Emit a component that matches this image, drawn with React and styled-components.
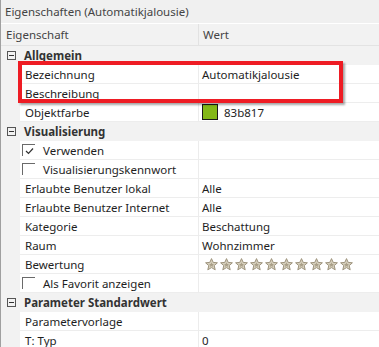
import React from 'react'
import styled, { createGlobalStyle } from 'styled-components'

const GlobalStyle = createGlobalStyle`
  html, body {
    margin: 0;
    padding: 0;
    background: #ffffff;
  }
  body {
    font-family: "Noto Sans", "Open Sans", sans-serif;
    font-size: 11.5px;
  }
`

const Panel = styled.div`
  position: relative;
  width: 379px;
  height: 347px;
  overflow: hidden;
  box-sizing: border-box;
  border-left: 1px solid #a0a0a0;
  background: #ffffff;
  color: #1e1e1e;
`

const TitleBar = styled.div`
  height: 24px;
  box-sizing: border-box;
  padding-left: 4px;
  display: flex;
  align-items: center;
  background: #f0f0f0;
  border-bottom: 1px solid #ffffff;
  color: #444;
`

const HeaderRow = styled.div`
  height: 22px;
  box-sizing: border-box;
  display: grid;
  grid-template-columns: 198px 1fr;
  background: #f2f2f2;
  border-bottom: 1px solid #e3e3e3;
  color: #444;
`

const HeaderCell = styled.div`
  display: flex;
  align-items: center;
  padding-left: ${(p) => (p.$first ? '5px' : '4px')};
  border-right: ${(p) => (p.$first ? '1px solid #e2e2e2' : 'none')};
`

const GroupRow = styled.div`
  height: 19px;
  box-sizing: border-box;
  display: flex;
  align-items: center;
  background: #f2f2f2;
  font-weight: 700;
  color: #333;
`

const ExpandBox = styled.span`
  width: 9px;
  height: 9px;
  box-sizing: border-box;
  margin: 0 8px 0 6px;
  border: 1px solid #555;
  position: relative;

  &::after {
    content: '';
    position: absolute;
    left: 1px;
    right: 1px;
    top: 3px;
    height: 1px;
    background: #333;
  }
`

const PropRow = styled.div`
  height: 19px;
  display: grid;
  grid-template-columns: 19px 179px 1fr;
`

const Gutter = styled.div`
  background: #f2f2f2;
`

const NameCell = styled.div`
  display: flex;
  align-items: center;
  box-sizing: border-box;
  padding-left: ${(p) => (p.$check ? '2px' : '5px')};
  border-right: 1px solid #ececec;
  border-bottom: 1px solid #ededed;
  white-space: nowrap;
`

const ValueCell = styled.div`
  display: flex;
  align-items: center;
  box-sizing: border-box;
  padding-left: 3px;
  border-bottom: 1px solid #ededed;
  white-space: nowrap;
`

const CheckBox = styled.span`
  width: 13px;
  height: 12px;
  box-sizing: border-box;
  margin-right: 8px;
  border-top: 1px solid #6a6a6a;
  border-left: 1px solid #6a6a6a;
  display: flex;
  align-items: center;
  justify-content: center;
`

const Swatch = styled.span`
  width: 16px;
  height: 16px;
  box-sizing: border-box;
  margin-right: 6px;
  border: 1px solid #1a1a1a;
  background: ${(p) => p.$color};
`

const Stars = styled.div`
  display: flex;
  gap: 2px;
  padding-left: 3px;
`

const Highlight = styled.div`
  position: absolute;
  left: 17px;
  top: 61px;
  width: 325px;
  height: 42px;
  box-sizing: border-box;
  border: 4px solid #ee1c24;
  box-shadow: 2px 2px 2px rgba(0, 0, 0, 0.35);
  pointer-events: none;
`

function Star() {
  return (
    <svg width="13" height="13" viewBox="0 0 13 13">
      <path
        d="M6.5 0.6 L8.2 4.4 L12.4 4.8 L9.2 7.6 L10.2 11.8 L6.5 9.6 L2.8 11.8 L3.8 7.6 L0.6 4.8 L4.8 4.4 Z"
        fill="#d6cfbc"
        stroke="#9d937c"
        strokeWidth="1"
        strokeLinejoin="round"
      />
      <path
        d="M6.5 4.2 L7.2 5.9 L9 6.1 L7.7 7.3 L8.1 9 L6.5 8.1 L4.9 9 L5.3 7.3 L4 6.1 L5.8 5.9 Z"
        fill="#a99f88"
      />
    </svg>
  )
}

function Check() {
  return (
    <svg width="9" height="8" viewBox="0 0 9 8">
      <path d="M1 4 L3.5 6.5 L8 1.5" fill="none" stroke="#333" strokeWidth="1.2" />
    </svg>
  )
}

const rows = [
  { group: 'Allgemein' },
  { name: 'Bezeichnung', value: 'Automatikjalousie' },
  { name: 'Beschreibung', value: '' },
  { name: 'Objektfarbe', value: '83b817', color: '#83b817' },
  { group: 'Visualisierung' },
  { name: 'Verwenden', check: true, checked: true },
  { name: 'Visualisierungskennwort', check: true },
  { name: 'Erlaubte Benutzer lokal', value: 'Alle' },
  { name: 'Erlaubte Benutzer Internet', value: 'Alle' },
  { name: 'Kategorie', value: 'Beschattung' },
  { name: 'Raum', value: 'Wohnzimmer' },
  { name: 'Bewertung', stars: 10 },
  { name: 'Als Favorit anzeigen', check: true },
  { group: 'Parameter Standardwert' },
  { name: 'Parametervorlage', value: '' },
  { name: 'T: Typ', value: '0' },
]

function Row({ row }) {
  if (row.group) {
    return (
      <GroupRow>
        <ExpandBox />
        {row.group}
      </GroupRow>
    )
  }

  return (
    <PropRow>
      <Gutter />
      <NameCell $check={row.check}>
        {row.check && <CheckBox>{row.checked && <Check />}</CheckBox>}
        {row.name}
      </NameCell>
      <ValueCell>
        {row.color && <Swatch $color={row.color} />}
        {row.stars ? (
          <Stars>
            {Array.from({ length: row.stars }, (_, i) => (
              <Star key={i} />
            ))}
          </Stars>
        ) : (
          row.value
        )}
      </ValueCell>
    </PropRow>
  )
}

export default function App() {
  return (
    <>
      <GlobalStyle />
      <Panel>
        <TitleBar>Eigenschaften (Automatikjalousie)</TitleBar>
        <HeaderRow>
          <HeaderCell $first>Eigenschaft</HeaderCell>
          <HeaderCell>Wert</HeaderCell>
        </HeaderRow>
        {rows.map((row, i) => (
          <Row key={i} row={row} />
        ))}
        <Highlight />
      </Panel>
    </>
  )
}
